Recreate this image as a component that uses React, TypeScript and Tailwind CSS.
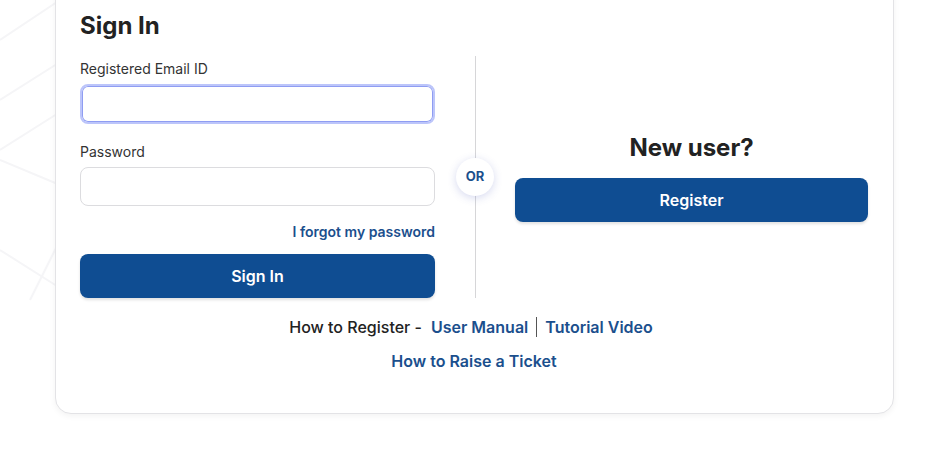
import React from "react"

function BackgroundLines() {
    return (
        <svg className="absolute inset-0 w-full h-full pointer-events-none" viewBox="0 0 926 459" preserveAspectRatio="none">
            <g stroke="#f5f5f7" strokeWidth="2" fill="none">
                <path d="M0 40 L60 0" />
                <path d="M0 100 L60 62" />
                <path d="M0 150 L60 112" />
                <path d="M0 160 L60 185" />
                <path d="M0 250 L60 288" />
                <path d="M30 300 L60 240" />
            </g>
        </svg>
    )
}

export default function App() {
    return (
        <div className="relative min-h-[459px] bg-white overflow-hidden" style={{ fontFamily: "Inter, 'Noto Sans', sans-serif" }}>
            <BackgroundLines />
            <div className="relative ml-[55px] w-[839px] -mt-[20px] bg-white border border-[#e3e3e6] rounded-2xl shadow-[0_2px_6px_rgba(0,0,0,0.05)] pl-[24px] pr-[25px] pt-[29px] pb-[40px]">
                <h1 className="text-[24px] leading-[32px] font-bold text-[#222]">Sign In</h1>

                <div className="flex mt-[14px]">
                    <div className="w-[355px] pt-[3px]">
                        <label className="block text-[14px] leading-[20px] text-[#333]">Registered Email ID</label>
                        <div className="mt-[5px] h-[40px] rounded-lg border-2 border-[#bcc5fa] shadow-[inset_0_0_0_1px_#8f9df2] bg-white" />

                        <label className="block mt-[18px] text-[14px] leading-[20px] text-[#333]">Password</label>
                        <div className="mt-[5px] h-[39px] rounded-lg border border-[#dcdcdf] bg-white" />

                        <div className="mt-[17px] text-right text-[14px] leading-[18px] font-semibold text-[#1b4f8d]">I forgot my password</div>

                        <button className="mt-[13px] w-full h-[44px] rounded-lg bg-[#0f4d92] text-white text-[16px] font-semibold shadow-[0_2px_3px_rgba(0,0,0,0.12)]">Sign In</button>
                    </div>

                    <div className="relative w-[80px] flex items-center justify-center">
                        <div className="absolute left-1/2 top-0 bottom-0 w-px bg-[#d6d6d8]" />
                        <div className="relative w-[38px] h-[38px] rounded-full bg-white flex items-center justify-center text-[13px] font-bold text-[#1b4f8d] shadow-[0_2px_8px_rgba(70,80,180,0.22)]">OR</div>
                    </div>

                    <div className="flex-1 flex flex-col justify-center">
                        <h2 className="text-center text-[24px] leading-[32px] font-bold text-[#222]">New user?</h2>
                        <button className="mt-[14px] w-full h-[44px] rounded-lg bg-[#0f4d92] text-white text-[16px] font-semibold shadow-[0_2px_3px_rgba(0,0,0,0.12)]">Register</button>
                    </div>
                </div>

                <div className="mt-[17px] pr-[6px] flex items-center justify-center text-[16px] leading-[24px]">
                    <span className="font-medium text-[#222]">How to Register -</span>
                    <span className="ml-[9px] font-semibold text-[#1b4f8d]">User Manual</span>
                    <span className="mx-[8px] w-px h-[20px] bg-[#555]" />
                    <span className="font-semibold text-[#1b4f8d]">Tutorial Video</span>
                </div>
                <div className="mt-[10px] text-center text-[16px] leading-[24px] font-semibold text-[#1b4f8d]">How to Raise a Ticket</div>
            </div>
        </div>
    )
}
